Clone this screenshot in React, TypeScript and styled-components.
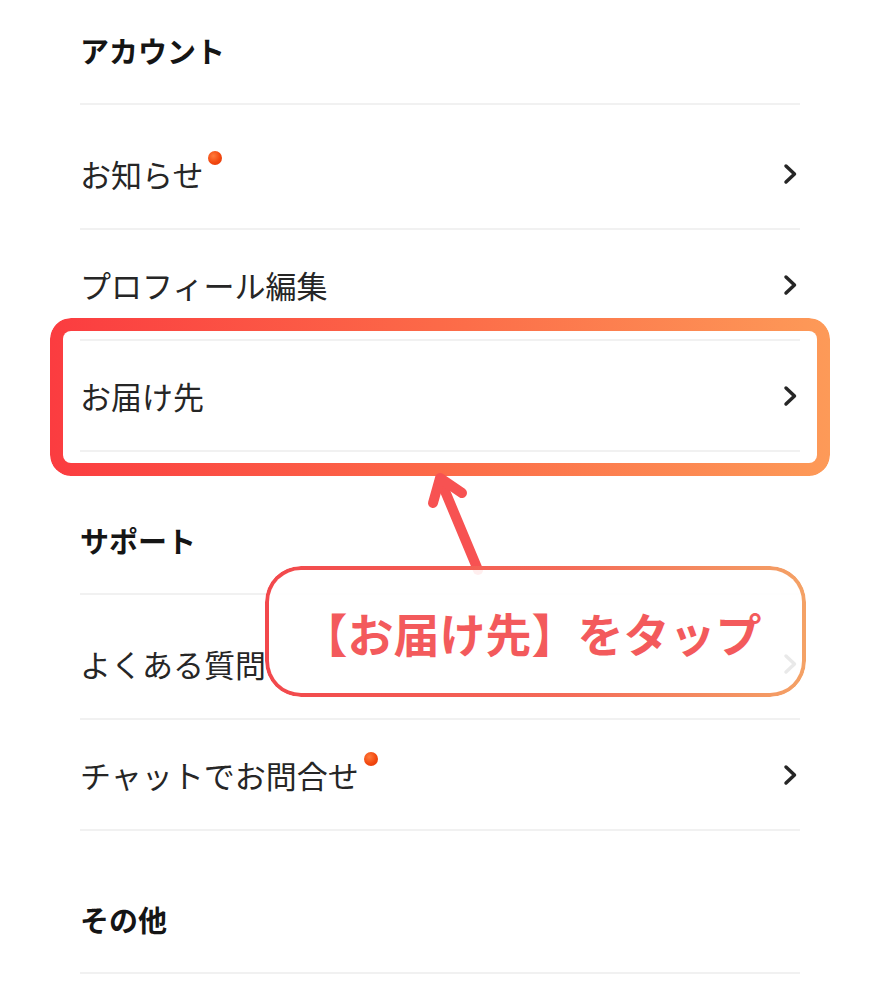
import React from "react";
import styled, { createGlobalStyle } from "styled-components";

const GlobalStyle = createGlobalStyle`
  html, body {
    margin: 0;
    padding: 0;
    background: #ffffff;
  }
  body {
    font-family: "Noto Sans CJK JP", "Noto Sans", sans-serif;
    color: #222222;
  }
`;

const Page = styled.div`
  position: relative;
  width: 880px;
  height: 1000px;
  overflow: hidden;
  box-sizing: border-box;
  padding: 0 80px;
`;

const Section = styled.section`
  display: flex;
  flex-direction: column;
  & + & {
    margin-top: 38px;
  }
`;

const Heading = styled.h2`
  margin: 0;
  padding: 32px 0 35px;
  font-size: 29px;
  line-height: 36px;
  font-weight: 700;
  color: #151515;
  border-bottom: 2px solid #f1f1f1;
`;

const List = styled.ul`
  list-style: none;
  margin: 0;
  padding: 14px 0 0;
`;

const Row = styled.li`
  display: flex;
  align-items: center;
  justify-content: space-between;
  height: 109px;
  padding-right: 3px;
  border-bottom: 2px solid #f1f1f1;
`;

const Label = styled.span`
  position: relative;
  display: inline-block;
  font-size: 31px;
  line-height: 36px;
  color: #262626;
`;

const Dot = styled.span`
  position: absolute;
  left: 100%;
  top: -5px;
  margin-left: 5px;
  width: 14px;
  height: 14px;
  border-radius: 50%;
  background: radial-gradient(circle at 38% 35%, #ff7b3c 0%, #f2480f 55%, #e0360a 100%);
`;

const Chevron = () => (
  <svg width="14" height="22" viewBox="0 0 14 22" aria-hidden="true">
    <polyline
      points="3,3 11.5,11 3,19"
      fill="none"
      stroke="#262626"
      strokeWidth="3.5"
      strokeLinecap="round"
      strokeLinejoin="round"
    />
  </svg>
);

const Highlight = styled.div`
  position: absolute;
  left: 50px;
  top: 318px;
  width: 780px;
  height: 158px;
  box-sizing: border-box;
  border-radius: 21px;
  padding: 13px;
  background: linear-gradient(90deg, #fb3c40 0%, #fc6a48 50%, #fd9a58 100%);
  -webkit-mask: linear-gradient(#000 0 0) content-box, linear-gradient(#000 0 0);
  -webkit-mask-composite: xor;
  mask-composite: exclude;
  pointer-events: none;
`;

const ArrowSvg = styled.svg`
  position: absolute;
  left: 410px;
  top: 460px;
  pointer-events: none;
`;

const Callout = styled.div`
  position: absolute;
  left: 265px;
  top: 566px;
  width: 541px;
  height: 131px;
  box-sizing: border-box;
  display: flex;
  align-items: center;
  justify-content: center;
  border-radius: 36px;
  background: rgba(255, 255, 255, 0.9);
  &::before {
    content: "";
    position: absolute;
    inset: 0;
    border-radius: 36px;
    padding: 4px;
    background: linear-gradient(90deg, #f2484c 0%, #f46a58 55%, #f4a266 100%);
    -webkit-mask: linear-gradient(#000 0 0) content-box, linear-gradient(#000 0 0);
    -webkit-mask-composite: xor;
    mask-composite: exclude;
  }
`;

const CalloutText = styled.span`
  position: relative;
  font-size: 46px;
  line-height: 56px;
  font-weight: 700;
  color: #f35a5c;
  white-space: nowrap;
  margin-left: -8px;
`;

type Item = { label: string; dot?: boolean };

const sections: { title: string; items: Item[] }[] = [
  {
    title: "アカウント",
    items: [
      { label: "お知らせ", dot: true },
      { label: "プロフィール編集" },
      { label: "お届け先" },
    ],
  },
  {
    title: "サポート",
    items: [
      { label: "よくある質問" },
      { label: "チャットでお問合せ", dot: true },
    ],
  },
  {
    title: "その他",
    items: [],
  },
];

export default function App() {
  return (
    <>
      <GlobalStyle />
      <Page>
        {sections.map((s) => (
          <Section key={s.title}>
            <Heading>{s.title}</Heading>
            {s.items.length > 0 && (
              <List>
                {s.items.map((it) => (
                  <Row key={it.label}>
                    <Label>
                      {it.label}
                      {it.dot && <Dot />}
                    </Label>
                    <Chevron />
                  </Row>
                ))}
              </List>
            )}
          </Section>
        ))}

        <Highlight />

        <ArrowSvg width="90" height="120" viewBox="0 0 90 120" aria-hidden="true">
          <g
            fill="none"
            stroke="#f75252"
            strokeWidth="10"
            strokeLinecap="round"
            strokeLinejoin="round"
          >
            <line x1="30" y1="19" x2="68" y2="110" />
            <polyline points="23,43 30,18 52,33" />
          </g>
        </ArrowSvg>

        <Callout>
          <CalloutText>【お届け先】をタップ</CalloutText>
        </Callout>
      </Page>
    </>
  );
}
